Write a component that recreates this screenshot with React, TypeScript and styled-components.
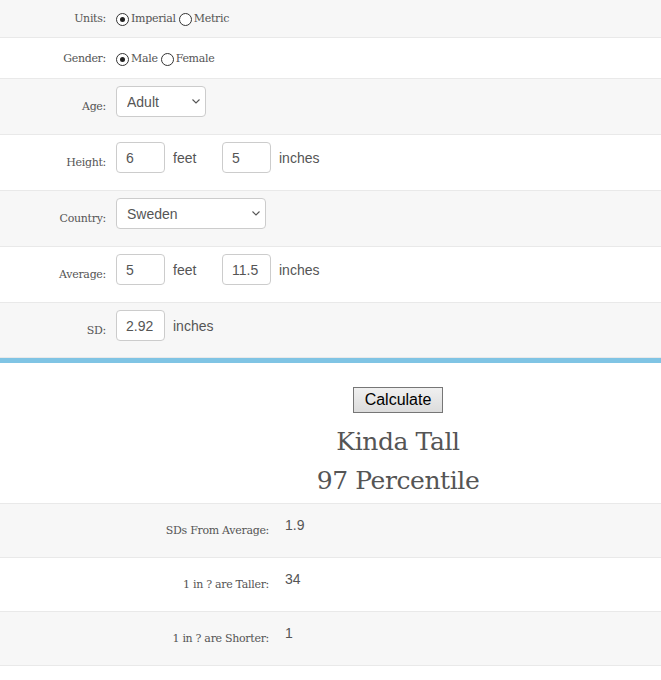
import React, { useState } from "react";
import styled, { createGlobalStyle } from "styled-components";

const Global = createGlobalStyle`
  html, body {
    margin: 0;
    padding: 0;
    background: #fff;
  }
  body {
    font-family: "DejaVu Serif", serif;
    color: #555;
  }
`;

const Form = styled.div`
  display: flex;
  flex-direction: column;
`;

const Row = styled.div<{ $alt?: boolean; $h: number }>`
  display: grid;
  grid-template-columns: 106px 1fr;
  column-gap: 10px;
  min-height: ${(p) => p.$h}px;
  background: ${(p) => (p.$alt ? "#f7f7f7" : "#fff")};
  border-bottom: 1px solid #e9e9e9;
  box-sizing: border-box;
`;

const Label = styled.div`
  align-self: center;
  text-align: right;
  font-size: 11px;
  letter-spacing: -0.3px;
  color: #555;
`;

const Field = styled.div<{ $pad: number }>`
  display: flex;
  align-items: center;
  padding-top: ${(p) => p.$pad}px;
  align-self: start;
  font-family: "Liberation Sans", Arial, sans-serif;
  font-size: 14px;
  color: #555;
`;

const Radios = styled.div`
  display: flex;
  align-items: center;
  align-self: center;
  font-size: 11px;
  letter-spacing: -0.3px;
  color: #555;
  label {
    display: flex;
    align-items: center;
  }
  label + label {
    margin-left: 3px;
  }
`;

const Radio = styled.input.attrs({ type: "radio" })`
  appearance: none;
  -webkit-appearance: none;
  box-sizing: border-box;
  width: 13px;
  height: 13px;
  margin: 2px 2px 0 0;
  border: 1px solid #333;
  border-radius: 50%;
  background: #fff;
  display: grid;
  place-items: center;
  &:checked::after {
    content: "";
    width: 5px;
    height: 5px;
    border-radius: 50%;
    background: #222;
  }
`;

const TextBox = styled.input`
  box-sizing: border-box;
  width: 49px;
  height: 31px;
  padding: 0 9px;
  border: 1px solid #ccc;
  border-radius: 4px;
  font-family: "Liberation Sans", Arial, sans-serif;
  font-size: 14px;
  color: #555;
  background: #fff;
  outline: none;
`;

const Unit = styled.span<{ $w?: number }>`
  margin-left: 8px;
  width: ${(p) => (p.$w ? `${p.$w}px` : "auto")};
`;

const SelectWrap = styled.div`
  position: relative;
  display: flex;
`;

const Select = styled.select<{ $w: number }>`
  appearance: none;
  -webkit-appearance: none;
  box-sizing: border-box;
  width: ${(p) => p.$w}px;
  height: 31px;
  padding: 0 10px;
  border: 1px solid #ccc;
  border-radius: 4px;
  font-family: "Liberation Sans", Arial, sans-serif;
  font-size: 14px;
  color: #555;
  background: #fff;
  outline: none;
`;

const Chevron = styled.svg`
  position: absolute;
  right: 6px;
  top: 13px;
  pointer-events: none;
`;

const Divider = styled.div`
  height: 5px;
  background: #80c4e4;
`;

const Result = styled.div`
  padding: 24px 0 3px 135px;
  text-align: center;
  border-bottom: 1px solid #e9e9e9;
`;

const CalcButton = styled.button`
  font-family: "Liberation Sans", Arial, sans-serif;
  font-size: 16px;
  color: #000;
  height: 26px;
  padding: 0 11px;
  border: 1px solid #767676;
  border-radius: 0;
  background: linear-gradient(#f0f0f0, #dcdcdc);
`;

const Verdict = styled.div`
  margin-top: 9px;
  font-size: 25px;
  line-height: 39px;
  color: #555;
  letter-spacing: -0.4px;
`;

const StatRow = styled.div<{ $alt?: boolean }>`
  display: grid;
  grid-template-columns: 269px 1fr;
  column-gap: 16px;
  height: 54px;
  background: ${(p) => (p.$alt ? "#f7f7f7" : "#fff")};
  border-bottom: 1px solid #e9e9e9;
  box-sizing: border-box;
`;

const StatValue = styled.div`
  padding-top: 13px;
  font-family: "Liberation Sans", Arial, sans-serif;
  font-size: 14px;
  color: #555;
`;

const Dropdown = ({ w, value, options }: { w: number; value: string; options: string[] }) => (
  <SelectWrap>
    <Select $w={w} defaultValue={value}>
      {options.map((o) => (
        <option key={o}>{o}</option>
      ))}
    </Select>
    <Chevron width="8" height="5" viewBox="0 0 8 5">
      <path d="M0.5 0.5 L4 4 L7.5 0.5" fill="none" stroke="#555" strokeWidth="1.1" />
    </Chevron>
  </SelectWrap>
);

export default function App() {
  const [units, setUnits] = useState("imperial");
  const [gender, setGender] = useState("male");

  return (
    <>
      <Global />
      <Form>
        <Row $alt $h={38}>
          <Label>Units:</Label>
          <Radios>
            <label>
              <Radio checked={units === "imperial"} onChange={() => setUnits("imperial")} />
              Imperial
            </label>
            <label>
              <Radio checked={units === "metric"} onChange={() => setUnits("metric")} />
              Metric
            </label>
          </Radios>
        </Row>
        <Row $h={41}>
          <Label>Gender:</Label>
          <Radios>
            <label>
              <Radio checked={gender === "male"} onChange={() => setGender("male")} />
              Male
            </label>
            <label>
              <Radio checked={gender === "female"} onChange={() => setGender("female")} />
              Female
            </label>
          </Radios>
        </Row>
        <Row $alt $h={56}>
          <Label>Age:</Label>
          <Field $pad={7}>
            <Dropdown w={90} value="Adult" options={["Adult", "Child"]} />
          </Field>
        </Row>
        <Row $h={56}>
          <Label>Height:</Label>
          <Field $pad={7}>
            <TextBox defaultValue="6" />
            <Unit $w={49}>feet</Unit>
            <TextBox defaultValue="5" />
            <Unit>inches</Unit>
          </Field>
        </Row>
        <Row $alt $h={56}>
          <Label>Country:</Label>
          <Field $pad={7}>
            <Dropdown w={150} value="Sweden" options={["Sweden", "Norway"]} />
          </Field>
        </Row>
        <Row $h={56}>
          <Label>Average:</Label>
          <Field $pad={7}>
            <TextBox defaultValue="5" />
            <Unit $w={49}>feet</Unit>
            <TextBox defaultValue="11.5" />
            <Unit>inches</Unit>
          </Field>
        </Row>
        <Row $alt $h={55}>
          <Label>SD:</Label>
          <Field $pad={7}>
            <TextBox defaultValue="2.92" />
            <Unit>inches</Unit>
          </Field>
        </Row>
      </Form>
      <Divider />
      <Result>
        <CalcButton>Calculate</CalcButton>
        <Verdict>
          Kinda Tall
          <br />
          97 Percentile
        </Verdict>
      </Result>
      <StatRow $alt>
        <Label>SDs From Average:</Label>
        <StatValue>1.9</StatValue>
      </StatRow>
      <StatRow>
        <Label>1 in ? are Taller:</Label>
        <StatValue>34</StatValue>
      </StatRow>
      <StatRow $alt>
        <Label>1 in ? are Shorter:</Label>
        <StatValue>1</StatValue>
      </StatRow>
    </>
  );
}
